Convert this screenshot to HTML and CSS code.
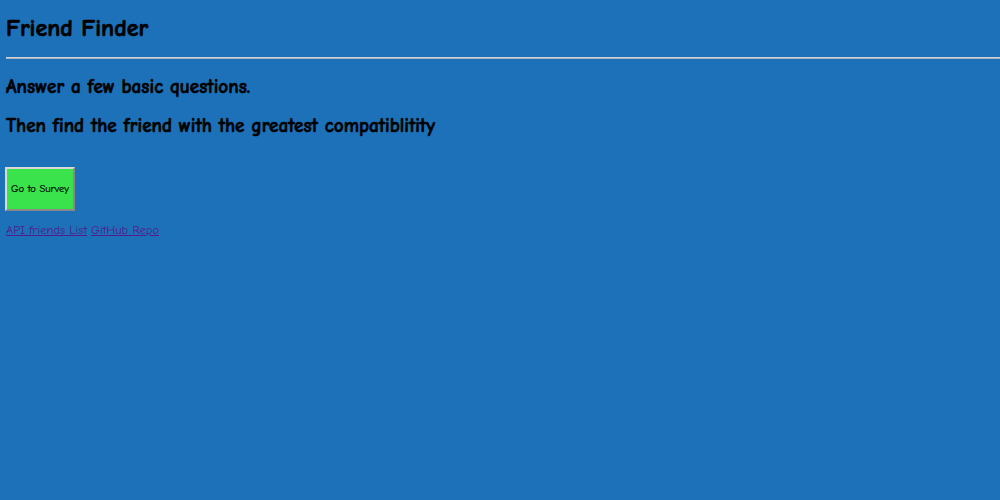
FILE: index.html
```html
<!DOCTYPE html>
<html>
<head>
<meta charset="utf-8">
<link rel="stylesheet" href="styles.css">
</head>
<body>
<div class="page">
  <h1 class="title">Friend Finder</h1>
  <hr class="rule">
  <h3 class="lead">Answer a few basic questions.</h3>
  <h3 class="lead">Then find the friend with the greatest compatiblitity</h3>
  <button class="survey-btn">Go to Survey</button>
  <div class="links">
    <a href="#" class="link">API friends List</a> <a href="#" class="link">GitHub Repo</a>
  </div>
</div>
</body>
</html>
```
FILE: styles.css
```css
html, body {
  margin: 0;
  padding: 0;
  background: #1c71b9;
  height: 100%;
}
body {
  font-family: "Comic Sans MS", "Comic Neue", "Liberation Sans", sans-serif;
  color: #000;
}
.page {
  padding: 0 0 0 6px;
  display: flex;
  flex-direction: column;
  align-items: flex-start;
}
.title {
  font-size: 24px;
  font-weight: bold;
  margin: 14px 0 0 0;
  line-height: 28px;
  -webkit-text-stroke: 0.7px #000;
}
.rule {
  align-self: stretch;
  margin: 15px 0 0 0;
  height: 0;
  border: 0;
  border-top: 1px solid #d2d2d2;
  border-bottom: 1px solid #a9b4c0;
}
.lead {
  font-size: 19.2px;
  font-weight: bold;
  margin: 0;
  line-height: 22px;
  -webkit-text-stroke: 0.6px #000;
}
.rule + .lead {
  margin-top: 17px;
}
.lead + .lead {
  margin-top: 17px;
}
.survey-btn {
  margin: 30px 0 0 -1px;
  width: 70px;
  height: 44px;
  padding: 0;
  background: #3ae24c;
  border: 2px solid;
  border-color: #d8d8d8 #8a8a8a #8a8a8a #d8d8d8;
  font-family: inherit;
  font-size: 10.5px;
  color: #000;
  -webkit-text-stroke: 0.2px #000;
}
.links {
  margin-top: 12px;
  font-size: 12.4px;
  line-height: 15px;
}
.link {
  color: #551a8b;
}
```
